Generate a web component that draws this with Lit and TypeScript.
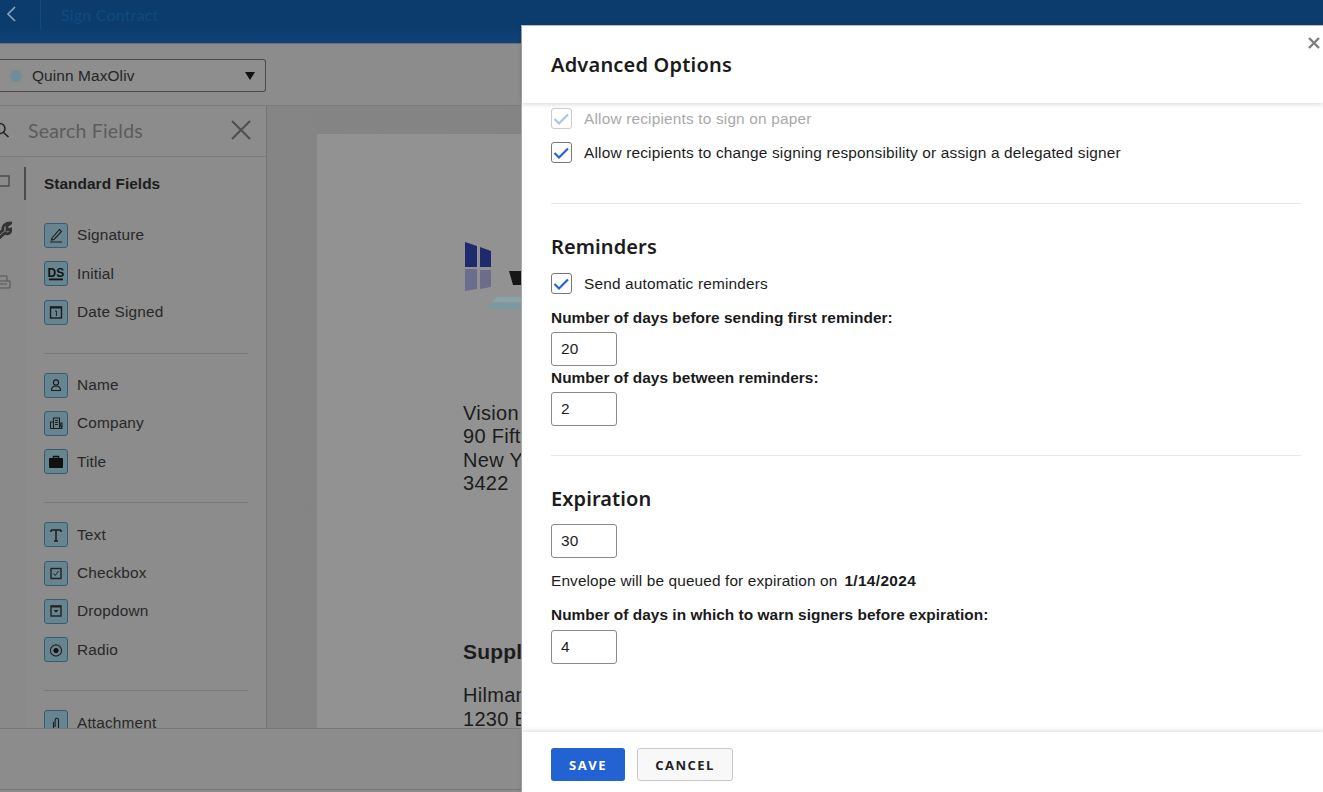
import { LitElement, html, css, svg } from "lit";
import { customElement } from "lit/decorators.js";

const ICONS: Record<string, unknown> = {
  signature: svg`<path d="M8 15 L15.5 6.5 L17.5 8.5 L10 16.5 L7.5 17 Z M6 19 H18" fill="none" stroke="#1c1c1c" stroke-width="1.1"/>`,
  initial: svg`<text x="12" y="14.5" text-anchor="middle" class="ds">DS</text><rect x="5" y="16.5" width="14" height="1.8" fill="#111"/>`,
  date: svg`<rect x="6.5" y="7" width="11" height="11" fill="none" stroke="#1c1c1c" stroke-width="1.4"/><rect x="6.5" y="6.5" width="11" height="2" fill="#1c1c1c"/><path d="M11 11 h1.4 v5" fill="none" stroke="#1c1c1c" stroke-width="1"/>`,
  name: svg`<circle cx="12" cy="9.5" r="2.6" fill="none" stroke="#1c1c1c" stroke-width="1.1"/><path d="M7.5 17.5 c0 -6 9 -6 9 0 Z" fill="none" stroke="#1c1c1c" stroke-width="1.1"/>`,
  company: svg`<path d="M9.5 17.5 V7 h6 V17.5 M6.5 17.5 V11 h3 M15.5 12 h2.5 v5.5 Z M6.5 17.5 h11.5 M11 9.5 h3 M11 11.5 h3 M11 13.5 h3" fill="none" stroke="#1c1c1c" stroke-width="1.1"/>`,
  title: svg`<path d="M9.5 8 V6.5 h5 V8" fill="none" stroke="#111" stroke-width="1.4"/><rect x="5" y="8" width="14" height="10" rx="1" fill="#111"/>`,
  text: svg`<path d="M7 7 H17 M7 7 V9 M17 7 V9 M12 7 V18 M10 18 H14" fill="none" stroke="#1c1c1c" stroke-width="1.5"/>`,
  checkbox: svg`<rect x="7" y="7.5" width="10" height="10" fill="none" stroke="#222" stroke-width="1.4"/><path d="M9.5 12.5 L11.2 14.5 L14.5 10" fill="none" stroke="#222" stroke-width="1"/>`,
  dropdown: svg`<rect x="7" y="7" width="10" height="10" fill="none" stroke="#222" stroke-width="1.4"/><rect x="7" y="6.5" width="10" height="2" fill="#222"/><path d="M9.5 11 H14.5 L12 13.8 Z" fill="#222"/>`,
  radio: svg`<circle cx="12" cy="12.5" r="5.6" fill="none" stroke="#222" stroke-width="1.1"/><circle cx="12" cy="12.5" r="2.5" fill="#111"/>`,
  attachment: svg`<path d="M9.5 11 V17 a2.4 2.4 0 0 0 5 0 V9 a1.7 1.7 0 0 0 -3.4 0 V16" fill="none" stroke="#1c1c1c" stroke-width="1.1"/>`,
};

const GROUPS = [
  [["signature", "Signature"], ["initial", "Initial"], ["date", "Date Signed"]],
  [["name", "Name"], ["company", "Company"], ["title", "Title"]],
  [["text", "Text"], ["checkbox", "Checkbox"], ["dropdown", "Dropdown"], ["radio", "Radio"]],
  [["attachment", "Attachment"]],
];

const check = svg`<svg viewBox="0 0 21 21" width="21" height="21"><path d="M3.5 11 L8 15.5 L17 6.5" fill="none" stroke="currentColor" stroke-width="2.2"/></svg>`;

@customElement("app-root")
export class AppRoot extends LitElement {
  static styles = css`
    :host { display: block; width: 1323px; height: 792px; position: relative; overflow: hidden; background: #8c8c8c; font-family: "Liberation Sans", Arial, sans-serif; color: #1f1f1f; }
    .page { height: 792px; display: flex; flex-direction: column; }
    .top { height: 44px; flex: none; background: linear-gradient(#0c3c6d 0, #0c3c6d 24px, #0e4278 44px); display: flex; align-items: flex-start; box-sizing: border-box; border-bottom: 1px solid #6c6f73; }
    .back { width: 40px; height: 30px; flex: none; border-right: 1px solid #14497c; box-sizing: content-box; display: flex; }
    .back svg { margin: 5px 0 0 5px; }
    .doc-title { margin: 5px 0 0 20px; font: 16px/19px "Lato", sans-serif; color: #0f4b81; letter-spacing: .2px; }
    .tool { height: 62px; flex: none; box-sizing: border-box; border-bottom: 1px solid #7c7c7c; padding-top: 15px; background: #8c8c8c; }
    .sel { width: 266px; height: 33px; box-sizing: border-box; border: 1px solid #4a4a4a; border-left: 0; border-radius: 0 3px 3px 0; display: flex; align-items: center; padding: 0 10px 0 10px; font-size: 15.4px; letter-spacing: .12px; color: #252525; background: #8e8e8e; }
    .dot { width: 12px; height: 12px; border-radius: 50%; background: #6f8d98; box-sizing: border-box; margin-right: 10px; }
    .sel span { flex: 1; }
    .arrow { width: 0; height: 0; border: 5.5px solid transparent; border-top: 8px solid #111; border-bottom: 0; }
    .main { flex: 1; min-height: 0; display: flex; overflow: hidden; }
    .panel { width: 267px; flex: none; box-sizing: border-box; border-right: 1px solid #737373; background: #8c8c8c; display: flex; flex-direction: column; overflow: hidden; }
    .search { height: 51px; flex: none; box-sizing: border-box; border-bottom: 1px solid #7b7b7b; padding-bottom: 2px; display: flex; align-items: center; font: 19.5px "Lato", sans-serif; letter-spacing: .2px; color: #5c5c5c; }
    .search .mag { margin-left: -6px; margin-right: 18px; display: flex; }
    .search span { flex: 1; }
    .search .x { margin-right: 14px; display: flex; }
    .cols { flex: 1; min-height: 0; display: flex; overflow: hidden; }
    .rail { width: 25px; flex: none; display: flex; flex-direction: column; background: #8a8a8a; }
    .rail svg { display: block; margin-left: -12px; flex: none; }
    .rail svg:nth-child(1) { margin-top: 18px; }
    .rail svg:nth-child(2) { margin-top: 34px; }
    .rail svg:nth-child(3) { margin-top: 34px; }
    .fields { flex: 1; position: relative; padding: 0 18px 0 19px; }
    .active { position: absolute; left: -1px; top: 10px; width: 2px; height: 33px; background: #4c4c4c; }
    .std { font-size: 15.4px; font-weight: 700; letter-spacing: .05px; line-height: 18px; color: #1d1d1d; padding-top: 18px; margin-bottom: 29.9px; }
    .group { display: flex; flex-direction: column; gap: 13.33px; padding-bottom: 28px; border-bottom: 1px solid #797979; margin-bottom: 19px; }
    .group:last-child { border: 0; }
    .item { display: flex; align-items: center; gap: 9px; font-size: 15.4px; letter-spacing: .15px; color: #282828; height: 25px; }
    .ico { width: 24px; height: 25px; flex: none; box-sizing: border-box; border: 1px solid #345c78; border-radius: 3px; background: #68848f; display: flex; align-items: center; justify-content: center; }
    .ico svg { width: 24px; height: 24px; flex: none; }
    .ds { font: 700 12px "Liberation Sans Narrow", "Liberation Sans", sans-serif; fill: #111; }
    .canvas { flex: 1; min-width: 0; background: linear-gradient(90deg, #858585, #808080); padding: 28px 0 0 50px; overflow: hidden; }
    .sheet { background: #929292; height: 600px; box-sizing: border-box; padding: 108px 0 0 146px; color: #1c1c1c; font-size: 20px; line-height: 23.3px; letter-spacing: .3px; white-space: nowrap; }
    .logo { display: block; margin: 0 0 93px 2px; }
    .sup { font-size: 21px; font-weight: 700; margin: 0 0 21px; padding-top: 145px; letter-spacing: .2px; }
    .bottom { height: 60px; flex: none; background: #8c8c8c; border-top: 1px solid #787878; border-bottom: 1px solid #757575; position: relative; z-index: 1; margin-bottom: 2px; }
    .modal { position: absolute; left: 521px; top: 25px; right: 0; bottom: 0; background: #fff; display: flex; flex-direction: column; border-top: 1px solid #bfc7cf; border-left: 1px solid #a8a8a8; box-sizing: border-box; z-index: 2; }
    .head { height: 77px; flex: none; box-sizing: border-box; padding: 26px 0 0 29px; font: 600 20px/26px "Noto Sans", sans-serif; color: #1b1b1b; letter-spacing: .2px; position: relative; z-index: 1; box-shadow: 0 1px 5px rgba(0,0,0,.18); }
    .close { position: absolute; right: 3px; top: 11px; display: block; }
    .body { flex: 1; min-height: 0; overflow: hidden; padding: 5px 22px 0 29px; font-size: 15.4px; color: #1c1c1c; }
    .chk { display: flex; align-items: center; height: 21px; gap: 12px; line-height: 21px; letter-spacing: .18px; }
    .chk + .chk { margin-top: 13px; }
    .box { width: 21px; height: 21px; box-sizing: border-box; border: 1px solid #777; border-radius: 3px; color: #2563d4; display: flex; align-items: center; justify-content: center; background: #fff; }
    .box svg { flex: none; }
    .dis { color: #a9a9a9; }
    .dis .box { border-color: #ccc; color: #a9c2ee; }
    hr { border: 0; border-top: 1px solid #e6e6e6; margin: 0; }
    .h2 { font: 600 20px/26px "Noto Sans", sans-serif; color: #1b1b1b; letter-spacing: .1px; }
    .lab { font-weight: 700; line-height: 18px; color: #1a1a1a; letter-spacing: .05px; }
    .num { width: 66px; height: 34px; box-sizing: border-box; border: 1px solid #8a8a8a; border-radius: 3px; padding: 0 9px 1px; display: flex; align-items: center; font-size: 15.4px; color: #1c1c1c; letter-spacing: .15px; }
    .s1 { margin-top: 40px; }
    .s2 { margin-top: 30px; }
    .s3 { margin-top: 13px; }
    .s5 { margin-top: 5px; }
    .s6 { margin-top: 3px; }
    .s7 { margin-top: 29px; }
    .s8 { margin-top: 30px; }
    .s9 { margin-top: 12px; }
    .s10 { margin-top: 15px; }
    .s11 { margin-top: 16px; }
    .s12 { margin-top: 14px; }
    .s13 { margin-top: 6px; }
    .exp { line-height: 18px; display: flex; gap: 7px; letter-spacing: .12px; }
    .exp b { color: #1a1a1a; letter-spacing: .35px; }
    .foot { height: 60px; flex: none; box-sizing: border-box; padding: 16px 0 0 29px; display: flex; align-items: flex-start; gap: 12px; box-shadow: 0 -1px 5px rgba(0,0,0,.16); position: relative; }
    .btn { height: 33px; border-radius: 3px; box-sizing: border-box; display: flex; align-items: center; justify-content: center; font: 700 13px "Open Sans", sans-serif; letter-spacing: 1.5px; }
    .save { width: 74px; background: #2362d2; color: #fff; }
    .cancel { width: 96px; background: #f8f8f8; border: 1px solid #c8c8c8; color: #222; }
  `;

  private field([icon, label]: string[]) {
    return html`<div class="item"><span class="ico"><svg viewBox="0 0 24 24">${ICONS[icon]}</svg></span>${label}</div>`;
  }

  render() {
    return html`
      <div class="page">
        <div class="top">
          <div class="back"><svg width="14" height="18" viewBox="0 0 14 18"><path d="M10 2 L3 9 L10 16" fill="none" stroke="#8fa6bc" stroke-width="1.6"/></svg></div>
          <div class="doc-title">Sign Contract</div>
        </div>
        <div class="tool">
          <div class="sel"><i class="dot"></i><span>Quinn MaxOliv</span><i class="arrow"></i></div>
        </div>
        <div class="main">
          <div class="panel">
            <div class="search">
              <i class="mag"><svg width="16" height="16" viewBox="0 0 16 16"><circle cx="6" cy="6.5" r="5" fill="none" stroke="#222" stroke-width="1.5"/><path d="M9.5 10.5 L14.5 15" stroke="#222" stroke-width="1.6"/></svg></i>
              <span>Search Fields</span>
              <i class="x"><svg width="22" height="22" viewBox="0 0 22 22"><path d="M2 2 L20 20 M20 2 L2 20" stroke="#4e4e4e" stroke-width="2"/></svg></i>
            </div>
            <div class="cols">
              <div class="rail">
                <svg width="24" height="12" viewBox="0 0 24 12"><rect x="1" y="1" width="20" height="10" fill="none" stroke="#444" stroke-width="1.3"/></svg>
                <svg width="24" height="20" viewBox="0 0 24 20"><path d="M5 18 L15 9 C14 5 17 2 23 2 L19 5 L19 9 L23 8 C23 12 20 14 17 12 L8 20" fill="none" stroke="#333" stroke-width="2.8"/></svg>
                <svg width="24" height="14" viewBox="0 0 24 14"><path d="M6 1 H19 V6 H22 V13 H2 V6 H6 Z M6 6 H19 M4 9 H19" fill="none" stroke="#555" stroke-width="1"/></svg>
              </div>
              <div class="fields">
                <i class="active"></i>
                <div class="std">Standard Fields</div>
                ${GROUPS.map((g) => html`<div class="group">${g.map((f) => this.field(f))}</div>`)}
              </div>
            </div>
          </div>
          <div class="canvas">
            <div class="sheet">
              <svg class="logo" width="60" height="67" viewBox="0 0 60 67">
                <path d="M0 0 L12 4 V25 L0 25 Z M15 5 L26 9 V25 L15 25 Z" fill="#1f2a6e"/>
                <path d="M0 27 H12 V47 L0 49 Z M15 28 H26 V45 L15 47 Z" fill="#6c6c8c"/>
                <path d="M44 29 H56 V43 H48 Z" fill="#161616"/>
                <path d="M32 55 H56 V60 H27 Z" fill="#87a5a9"/>
                <path d="M26 61 H56 V67 H21 Z" fill="#7b9aa0"/>
              </svg>
              <div>Vision</div>
              <div>90 Fifth</div>
              <div>New York</div>
              <div>3422</div>
              <div class="sup">Supplier</div>
              <div>Hilman</div>
              <div>1230 Broadway</div>
            </div>
          </div>
        </div>
        <div class="bottom"></div>
      </div>
      <section class="modal">
        <div class="head">Advanced Options
          <svg class="close" width="12" height="12" viewBox="0 0 12 12"><path d="M1 1 L11 11 M11 1 L1 11" stroke="#7d7d7d" stroke-width="2.4"/></svg>
        </div>
        <div class="body">
          <div class="chk dis"><span class="box">${check}</span>Allow recipients to sign on paper</div>
          <div class="chk"><span class="box">${check}</span>Allow recipients to change signing responsibility or assign a delegated signer</div>
          <hr class="s1" />
          <div class="h2 s2">Reminders</div>
          <div class="chk s3"><span class="box">${check}</span>Send automatic reminders</div>
          <div class="lab s10">Number of days before sending first reminder:</div>
          <div class="num s5">20</div>
          <div class="lab s6">Number of days between reminders:</div>
          <div class="num s5">2</div>
          <hr class="s7" />
          <div class="h2 s8">Expiration</div>
          <div class="num s9">30</div>
          <div class="exp s12"><span>Envelope will be queued for expiration on</span><b>1/14/2024</b></div>
          <div class="lab s11">Number of days in which to warn signers before expiration:</div>
          <div class="num s13">4</div>
        </div>
        <div class="foot">
          <div class="btn save">SAVE</div>
          <div class="btn cancel">CANCEL</div>
        </div>
      </section>
    `;
  }
}
